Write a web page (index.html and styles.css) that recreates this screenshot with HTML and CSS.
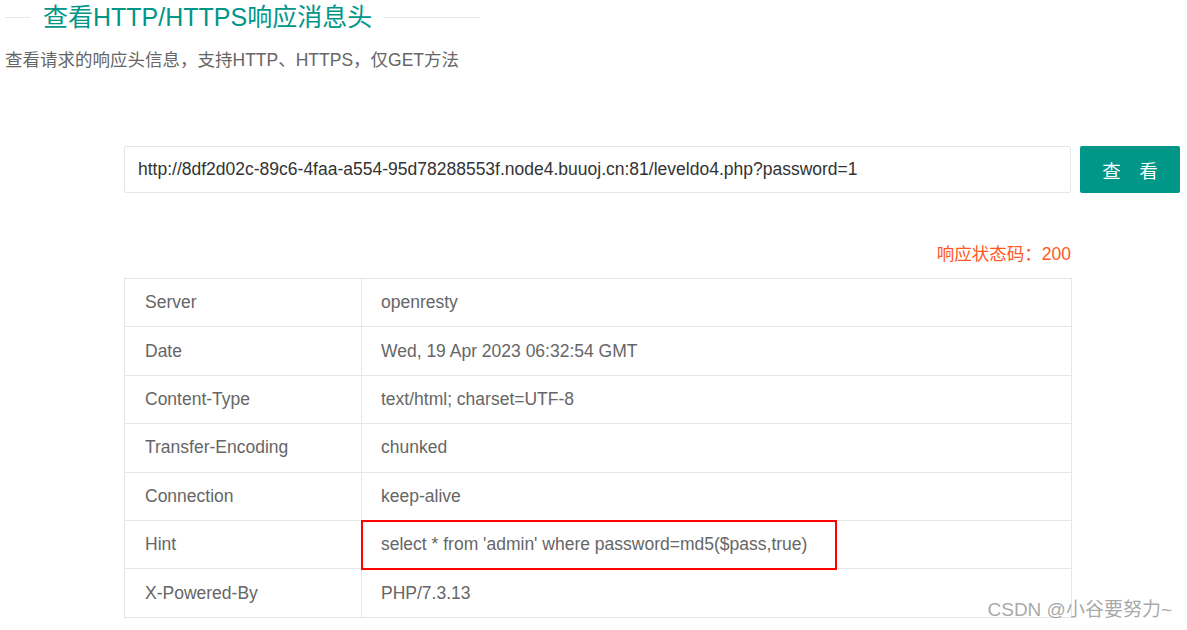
FILE: index.html
```html
<!DOCTYPE html>
<html lang="zh">
<head>
  <meta charset="UTF-8">
  <title>查看HTTP/HTTPS响应消息头</title>
  <link rel="stylesheet" href="styles.css">
</head>
<body>

<div class="legend">
  <span class="legend-line short"></span>
  <h1>查看HTTP/HTTPS响应消息头</h1>
  <span class="legend-line long"></span>
</div>
<p class="desc">查看请求的响应头信息，支持HTTP、HTTPS，仅GET方法</p>

<div class="tool">
  <form class="query">
    <input type="text" class="url-input" value="http://8df2d02c-89c6-4faa-a554-95d78288553f.node4.buuoj.cn:81/leveldo4.php?password=1">
    <button type="button" class="query-btn">查　看</button>
  </form>

  <div class="status">响应状态码：200</div>

  <table class="headers">
    <colgroup>
      <col class="col-name">
      <col>
    </colgroup>
    <tbody>
      <tr><td>Server</td><td>openresty</td></tr>
      <tr><td>Date</td><td>Wed, 19 Apr 2023 06:32:54 GMT</td></tr>
      <tr><td>Content-Type</td><td>text/html; charset=UTF-8</td></tr>
      <tr><td>Transfer-Encoding</td><td>chunked</td></tr>
      <tr><td>Connection</td><td>keep-alive</td></tr>
      <tr><td>Hint</td><td class="marked">select * from 'admin' where password=md5($pass,true)<span class="mark-box"></span></td></tr>
      <tr><td>X-Powered-By</td><td>PHP/7.3.13</td></tr>
    </tbody>
  </table>
</div>

<div class="watermark">CSDN @小谷要努力~</div>

</body>
</html>
```

FILE: styles.css
```css
body {
  margin: 0;
  padding: 0 5px;
  font-family: "Liberation Sans", "Noto Sans CJK SC", sans-serif;
  color: #666;
  background: #fff;
  position: relative;
  min-height: 630px;
}
.legend {
  display: flex;
  align-items: center;
  width: 475px;
  height: 34px;
}
.legend-line {
  height: 1px;
  background: #e6e6e6;
}
.legend-line.short {
  width: 25px;
}
.legend-line.long {
  flex: 1;
}
.legend h1 {
  margin: 0;
  padding: 0 12px 0 13px;
  font-size: 25px;
  font-weight: normal;
  line-height: 34px;
  color: #009688;
  white-space: nowrap;
}
.desc {
  margin: 14px 0 0;
  font-size: 17.5px;
  line-height: 24px;
  color: #666;
}
.tool {
  margin-left: 119px;
}
.query {
  display: flex;
  gap: 9px;
  margin-top: 74px;
}
.url-input {
  box-sizing: border-box;
  width: 947px;
  height: 47px;
  padding: 0 13px;
  border: 1px solid #e6e6e6;
  border-radius: 2px;
  font-family: inherit;
  font-size: 17.5px;
  color: #333;
  outline: none;
}
.query-btn {
  width: 100px;
  height: 47px;
  border: none;
  border-radius: 2px;
  background: #009688;
  color: #fff;
  font-family: inherit;
  font-size: 18.5px;
  cursor: pointer;
}
.status {
  width: 947px;
  margin-top: 49px;
  text-align: right;
  font-size: 17.5px;
  line-height: 24px;
  color: #ff5722;
}
.headers {
  margin-top: 12px;
  width: 948px;
  border-collapse: collapse;
  font-size: 17.5px;
  color: #666;
}
.col-name {
  width: 237px;
}
.headers td {
  height: 47.4px;
  padding: 0 20px;
  border: 1px solid #e6e6e6;
  vertical-align: middle;
}
.headers td + td {
  padding-left: 19px;
}
.marked {
  position: relative;
}
.mark-box {
  position: absolute;
  left: -1px;
  top: -1px;
  width: 476px;
  height: 50px;
  box-sizing: border-box;
  border: 2px solid #f00;
}
.watermark {
  position: absolute;
  right: 15px;
  top: 597px;
  font-size: 19px;
  line-height: 26px;
  color: rgba(130, 130, 130, 0.7);
}
```
